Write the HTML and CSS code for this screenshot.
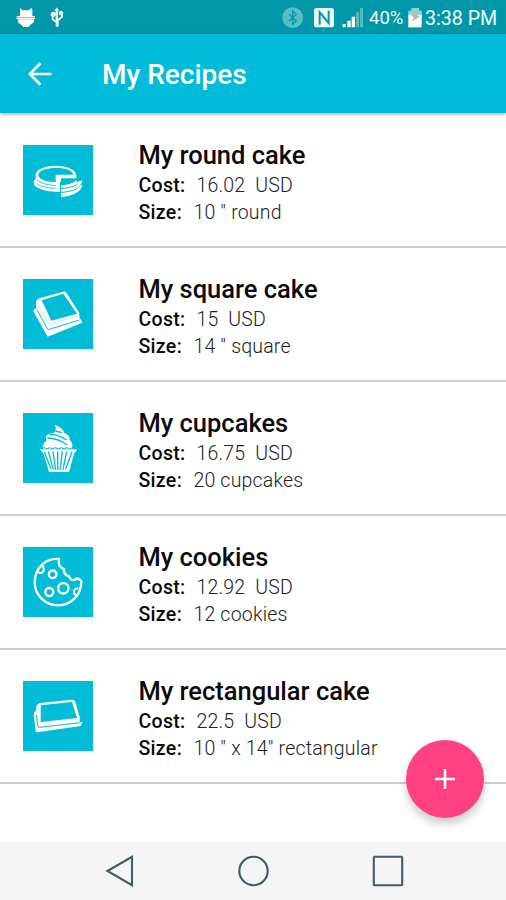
FILE: index.html
```html
<!DOCTYPE html>
<html lang="en">
<head>
  <meta charset="UTF-8">
  <title>My Recipes</title>
  <link rel="stylesheet" href="styles.css">
</head>
<body>
<div class="status">
  <svg class="status-left" width="64" height="34" viewBox="0 0 192 102" fill="#fff">
    <path d="M60 24l8 7h18l8-7 3 4v20h8v4H50v-4h10z"/>
    <path d="M50 53h55v4H50z"/>
    <path d="M53 58h50l-3 10-9 6-6 7H70l-6-7-9-6z"/>
    <g opacity=".88">
      <path d="M171 22l7 10h-4v24l8-6V39h7v13l-13 11v11a5 5 0 1 1-9 0v-6l-12-9V47a5 5 0 1 1 6 0v9l6 5V32h-4z"/>
      <circle cx="160" cy="43" r="8"/>
      <circle cx="183" cy="39" r="7"/>
    </g>
  </svg>
  <div class="status-right">
    <svg width="96" height="34" viewBox="0 0 288 102">
      <circle cx="68" cy="53" r="31" fill="#5bbcc6"/>
      <path d="M57 42l22 21-11 10V33l11 10-22 21" fill="none" stroke="#0399a8" stroke-width="4"/>
      <rect x="132" y="24" width="60" height="58" rx="8" fill="#effafa"/>
      <path d="M149 74V37l27 32V32" fill="none" stroke="#0798a8" stroke-width="6"/>
      <path d="M218 72h9v10h-9zM232 62h10v20h-10zM245 50h10v32h-10z" fill="#fff"/>
      <path d="M258 37h9v45h-9zM270 24h9v58h-9z" fill="#57b9c4"/>
    </svg>
    <span class="percent">40%</span>
    <svg class="battery" width="14" height="34" viewBox="0 0 42 102">
      <path d="M1 32h9v-8h23v8h8v22H1z" fill="#8fd0d5"/>
      <path d="M1 44h40v38H1z" fill="#fff"/>
      <path d="M33 36L9 46l8 7-6 12 24-14-7-5z" fill="#bcb5b5"/>
    </svg>
    <span class="clock">3:38 PM</span>
  </div>
</div>

<div class="toolbar">
  <svg class="back" width="24" height="24" viewBox="0 0 24 24">
    <path d="M23.5 12H2M12.4 1.2L1.8 12l10.6 10.8" fill="none" stroke="#fff" stroke-width="2.7"/>
  </svg>
  <h1>My Recipes</h1>
</div>

<div class="list">
  <div class="row">
    <svg class="thumb" viewBox="24 30 210 210">
      <path d="M123 92c-36 0-61 12-61 28v11c-9 9-8 20 6 27 15 8 34 12 56 12V141c-33 0-54-9-54-22 0-12 24-20 54-20 29 0 48 7 51 20h9c-4-16-29-27-61-27z" fill="#fff"/>
      <path d="M66 135c11 9 29 15 58 17M66 146c11 9 29 13 58 14" fill="none" stroke="#00bcd6" stroke-width="2.5"/>
      <path d="M122 119h62v11h-46v10h-16zM122 139h13v31h-13zM138 150c22 0 37-5 46-16v8l17-6c1 9-4 14-10 16l11-2c-3 20-27 33-64 36z" fill="#fff"/>
      <path d="M138 160c24 0 43-6 50-14M138 172c26-1 47-8 56-18" fill="none" stroke="#00bcd6" stroke-width="3"/>
    </svg>
    <div class="info">
      <h2>My round cake</h2>
      <p><b>Cost:</b><span class="cost">16.02 &nbsp;USD</span></p>
      <p><b>Size:</b><span>10 " round</span></p>
    </div>
  </div>
  <div class="row">
    <svg class="thumb" viewBox="24 30 210 210">
      <path d="M74 88l70-20q8-2 11 5l38 59v13l8 13q2 3-3 5L98 203 55 127q0-6 9-10l-1-16q0-9 11-13z" fill="#fff"/>
      <path d="M80 94l65-20 41 60-77 21z" fill="#00bcd6"/>
      <path d="M65 121l34 61 94-29" fill="none" stroke="#00bcd6" stroke-width="3"/>
      <path d="M68 106l34 60 86-24" fill="none" stroke="#a8e8f0" stroke-width="2"/>
    </svg>
    <div class="info">
      <h2>My square cake</h2>
      <p><b>Cost:</b><span class="cost">15 &nbsp;USD</span></p>
      <p><b>Size:</b><span>14 " square</span></p>
    </div>
  </div>
  <div class="row">
    <svg class="thumb" viewBox="24 30 210 210">
      <path d="M120 65c14 5 25 14 28 25 12 5 17 12 16 21 8 6 10 14 7 26H83c0-13 4-20 12-24-5-10-2-18 8-21l14-3c6-7 7-14 3-24z" fill="#fff"/>
      <path d="M103 94c18-1 36 6 52 17M97 105c21 0 41 7 59 21M121 84l20 5" fill="none" stroke="#00bcd6" stroke-width="4"/>
      <path d="M74 139h113l-10 13-15 55h-60L86 152z" fill="#fff"/>
      <path d="M88 147l20 51M100 145l15 55M114 145l8 56M128 145v56M142 145l-7 56M155 145l-11 55M171 146l-19 52" fill="none" stroke="#00bcd6" stroke-width="4"/>
      <path d="M80 138q8-9 16 0 8-9 16 0 9-9 18 0 9-9 18 0 8-9 16 0 8-9 16 0" fill="none" stroke="#00bcd6" stroke-width="3"/>
    </svg>
    <div class="info">
      <h2>My cupcakes</h2>
      <p><b>Cost:</b><span class="cost">16.75 &nbsp;USD</span></p>
      <p><b>Size:</b><span>20 cupcakes</span></p>
    </div>
  </div>
  <div class="row">
    <svg class="thumb" viewBox="24 30 210 210">
      <g fill="none" stroke="#fff" stroke-width="7" stroke-linejoin="round">
        <path d="M132 66C91 63 60 93 59 135c0 40 32 70 70 70 40 0 70-31 70-73-7-7-12-10-17-5-10 4-18 0-20-9-13-5-17-13-14-21-14-6-19-13-16-31z"/>
        <circle cx="113" cy="112" r="11.5"/>
        <circle cx="145" cy="154" r="15.5"/>
        <circle cx="103" cy="165" r="12"/>
        <path d="M83 86c5 8 4 15-1 20-4 3-9 2-13-1M190 154c-11 0-16 8-12 16 2 5 5 6 10 7" stroke-width="6"/>
      </g>
    </svg>
    <div class="info">
      <h2>My cookies</h2>
      <p><b>Cost:</b><span class="cost">12.92 &nbsp;USD</span></p>
      <p><b>Size:</b><span>12 cookies</span></p>
    </div>
  </div>
  <div class="row">
    <svg class="thumb" viewBox="24 30 210 210">
      <path d="M75 96l95-10q8-1 11 6l13 46v15h7l-3 12-132 19q-4 0-4-5l-6-48q0-8 8-13V106q2-8 11-10z" fill="#fff"/>
      <path d="M77 103l94-10 15 48-109 12z" fill="#00bcd6"/>
      <path d="M64 132l5 35q1 3 5 2l122-14" fill="none" stroke="#00bcd6" stroke-width="3"/>
    </svg>
    <div class="info">
      <h2>My rectangular cake</h2>
      <p><b>Cost:</b><span class="cost">22.5 &nbsp;USD</span></p>
      <p><b>Size:</b><span>10 " x 14" rectangular</span></p>
    </div>
  </div>
</div>

<div class="fab">
  <svg width="22" height="22" viewBox="0 0 22 22">
    <path d="M11 1v20M1 11h20" stroke="#fff" stroke-width="2.6"/>
  </svg>
</div>

<div class="navbar">
  <svg width="30" height="32" viewBox="0 0 30 32"><path d="M2.5 16L27 1.8v28.4z"/></svg>
  <svg width="32" height="32" viewBox="0 0 32 32"><circle cx="15.5" cy="16" r="14.2"/></svg>
  <svg width="32" height="32" viewBox="0 0 32 32"><rect x="1.8" y="1.8" width="28.4" height="28.4" rx="1"/></svg>
</div>
</body>
</html>
```
FILE: styles.css
```css
body {
  margin: 0;
  height: 900px;
  position: relative;
  display: flex;
  flex-direction: column;
  overflow: hidden;
  background: #fff;
  color: #0b0b0b;
  font-family: Roboto, "Liberation Sans", sans-serif;
}
h1, h2, p {
  margin: 0;
}
svg {
  display: block;
  flex: none;
}
.status {
  height: 34px;
  flex: none;
  display: flex;
  justify-content: space-between;
  background: #0098a8;
  color: #f2fbfb;
}
.status-right {
  display: flex;
  align-items: center;
  padding-right: 9px;
  white-space: nowrap;
}
.percent {
  width: 35px;
  margin: 2px 0 0 3px;
  font-size: 18.5px;
}
.battery {
  margin-left: 4px;
}
.clock {
  width: 72px;
  margin: 3px 0 0 3px;
  font-size: 19.6px;
}
.toolbar {
  height: 79px;
  flex: none;
  display: flex;
  align-items: center;
  padding-left: 28px;
  background: #00bcd9;
  box-shadow: 0 1px 4px rgba(0, 0, 0, .4);
  z-index: 1;
}
.toolbar h1 {
  margin: 2px 0 0 50px;
  color: #fff;
  font-size: 28px;
  font-weight: 500;
}
.list {
  flex: 1;
  padding-top: 1px;
}
.row {
  height: 134px;
  box-sizing: border-box;
  display: flex;
  align-items: flex-start;
  padding: 0 23px;
  border-bottom: 2px solid #cdcdcd;
}
.thumb {
  width: 70px;
  height: 70px;
  margin-top: 31px;
  background: #00bcd6;
}
.info {
  margin: 25px 0 0 45.4px;
  white-space: nowrap;
}
.info h2 {
  font-size: 25.5px;
  font-weight: 500;
  line-height: 33px;
}
.info p {
  font-size: 19.5px;
  line-height: 27px;
}
.info b {
  display: inline-block;
  width: 55px;
  font-weight: 500;
  letter-spacing: .35px;
}
.info span {
  color: #222;
  font-weight: 300;
  letter-spacing: .2px;
}
.info .cost {
  margin-left: 3px;
}
.fab {
  position: absolute;
  left: 406px;
  top: 740px;
  width: 78px;
  height: 78px;
  display: flex;
  align-items: center;
  justify-content: center;
  border-radius: 50%;
  background: #ff4081;
  box-shadow: 0 6px 9px rgba(0, 0, 0, .2);
}
.navbar {
  height: 58px;
  flex: none;
  display: flex;
  align-items: center;
  justify-content: space-between;
  padding: 0 102px 0 105px;
  background: #f5f5f5;
}
.navbar path, .navbar circle, .navbar rect {
  fill: none;
  stroke: #455a64;
  stroke-width: 2.1;
}
```
